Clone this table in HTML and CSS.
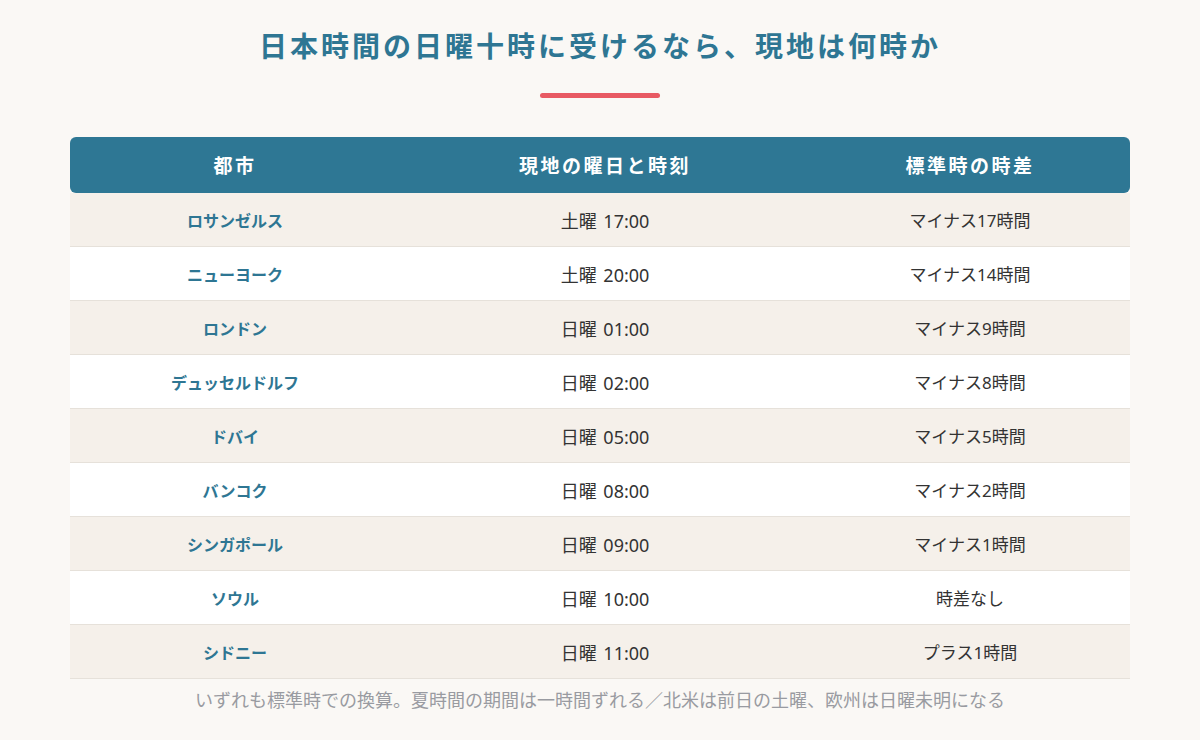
FILE: index.html
```html
<!DOCTYPE html>
<html lang="ja">
<head>
<meta charset="utf-8">
<link rel="stylesheet" href="styles.css">
</head>
<body>
<main class="page">
  <h1 class="title">日本時間の日曜十時に受けるなら、現地は何時か</h1>
  <div class="accent"></div>
  <table class="tz">
    <thead>
      <tr><th class="c1">都市</th><th class="c2">現地の曜日と時刻</th><th class="c3">標準時の時差</th></tr>
    </thead>
    <tbody>
      <tr><td class="city">ロサンゼルス</td><td class="time">土曜 17:00</td><td>マイナス17時間</td></tr>
      <tr><td class="city">ニューヨーク</td><td class="time">土曜 20:00</td><td>マイナス14時間</td></tr>
      <tr><td class="city">ロンドン</td><td class="time">日曜 01:00</td><td>マイナス9時間</td></tr>
      <tr><td class="city">デュッセルドルフ</td><td class="time">日曜 02:00</td><td>マイナス8時間</td></tr>
      <tr><td class="city">ドバイ</td><td class="time">日曜 05:00</td><td>マイナス5時間</td></tr>
      <tr><td class="city">バンコク</td><td class="time">日曜 08:00</td><td>マイナス2時間</td></tr>
      <tr><td class="city">シンガポール</td><td class="time">日曜 09:00</td><td>マイナス1時間</td></tr>
      <tr><td class="city">ソウル</td><td class="time">日曜 10:00</td><td>時差なし</td></tr>
      <tr><td class="city">シドニー</td><td class="time">日曜 11:00</td><td>プラス1時間</td></tr>
    </tbody>
  </table>
  <p class="note">いずれも標準時での換算。夏時間の期間は一時間ずれる／北米は前日の土曜、欧州は日曜未明になる</p>
</main>
</body>
</html>
```
FILE: styles.css
```css
html, body {
  margin: 0;
  padding: 0;
  background: #faf8f5;
}
body {
  font-family: "Noto Sans", "Noto Sans CJK JP", sans-serif;
  color: #333;
}
.page {
  width: 1060px;
  margin: 0 auto;
  padding-top: 26px;
  display: flex;
  flex-direction: column;
  align-items: center;
}
.title {
  margin: 0;
  font-size: 28px;
  font-weight: 700;
  color: #2e7693;
  letter-spacing: 3px;
  line-height: 40px;
}
.accent {
  width: 120px;
  height: 5px;
  border-radius: 3px;
  background: #e85a63;
  margin-top: 27px;
  margin-bottom: 39px;
}
.tz {
  width: 1060px;
  border-collapse: separate;
  border-spacing: 0;
  table-layout: fixed;
}
.tz th {
  background: #2e7794;
  color: #fff;
  font-size: 19px;
  font-weight: 700;
  height: 56px;
  padding: 0;
  letter-spacing: 2.5px;
}
.tz th.c1 { width: 330px; border-top-left-radius: 6px; border-bottom-left-radius: 6px; }
.tz th.c2 { width: 410px; }
.tz th.c3 { width: 320px; border-top-right-radius: 6px; border-bottom-right-radius: 6px; }
.tz td {
  text-align: center;
  height: 53px;
  padding: 0;
  font-size: 17px;
  color: #333;
  border-bottom: 1px solid #e6e1da;
}
.tz td.time {
  font-size: 18px;
  word-spacing: 2px;
}
.tz tbody tr:nth-child(odd) td { background: #f5f0ea; }
.tz tbody tr:nth-child(even) td { background: #ffffff; }
.tz td.city {
  color: #2e7693;
  font-weight: 700;
  font-size: 16px;
}
.note {
  margin: 9px 0 0;
  font-size: 18px;
  color: #999ba1;
  line-height: 24px;
}
```
